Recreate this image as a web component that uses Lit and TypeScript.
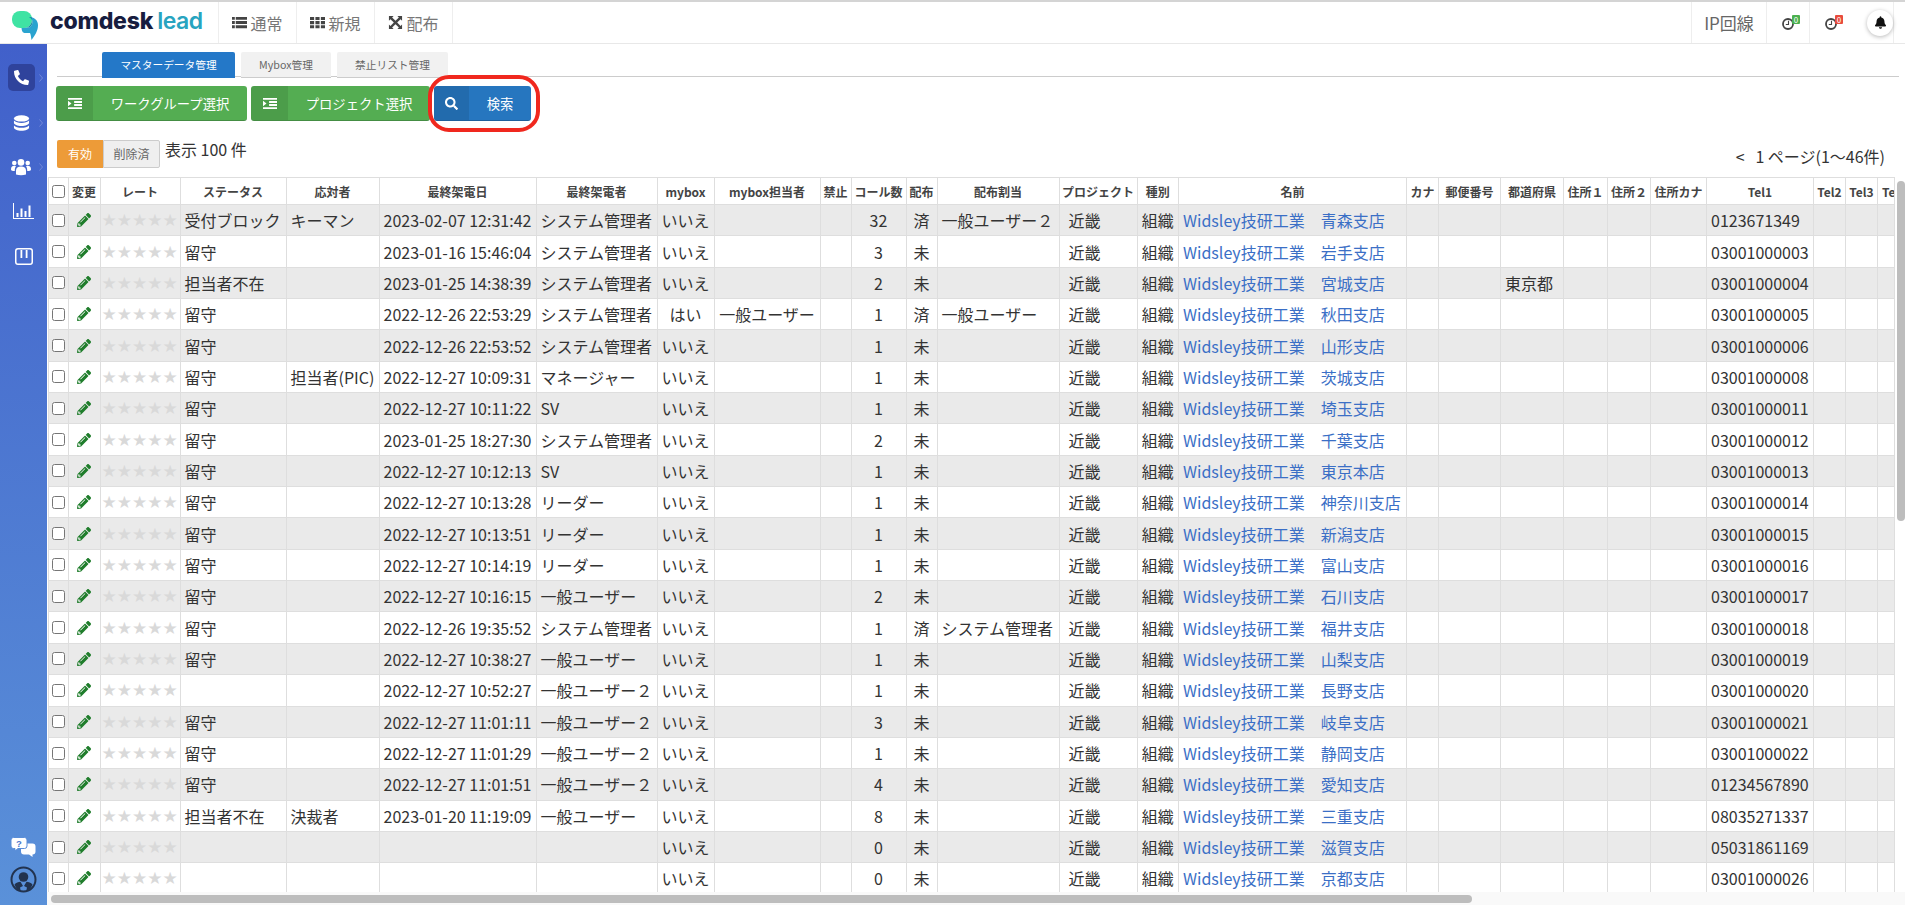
import { LitElement, html, css, svg } from "lit";
import { customElement } from "lit/decorators.js";

// column widths, taken left to right
const cols = [
  { w: 19.5, label: "" },
  { w: 32, label: "変更" },
  { w: 80, label: "レート" },
  { w: 106, label: "ステータス" },
  { w: 93, label: "応対者" },
  { w: 157, label: "最終架電日" },
  { w: 121, label: "最終架電者" },
  { w: 57, label: "mybox" },
  { w: 106, label: "mybox担当者" },
  { w: 31, label: "禁止" },
  { w: 55, label: "コール数" },
  { w: 31, label: "配布" },
  { w: 122, label: "配布割当" },
  { w: 78, label: "プロジェクト" },
  { w: 41.5, label: "種別" },
  { w: 228, label: "名前" },
  { w: 32, label: "カナ" },
  { w: 62, label: "郵便番号" },
  { w: 63, label: "都道府県" },
  { w: 44, label: "住所１" },
  { w: 43, label: "住所２" },
  { w: 56, label: "住所カナ" },
  { w: 107, label: "Tel1" },
  { w: 32, label: "Tel2" },
  { w: 32, label: "Tel3" },
  { w: 16.5, label: "Tel4" },
];

interface Row {
  st: string;
  res: string;
  date: string;
  by: string;
  mb: string;
  mbBy?: string;
  n: string;
  dist: string;
  assign?: string;
  branch: string;
  pref?: string;
  tel: string;
}

const rows: Row[] = [
  { st: "受付ブロック", res: "キーマン", date: "2023-02-07 12:31:42", by: "システム管理者", mb: "いいえ", n: "32", dist: "済", assign: "一般ユーザー２", branch: "青森支店", tel: "0123671349" },
  { st: "留守", res: "", date: "2023-01-16 15:46:04", by: "システム管理者", mb: "いいえ", n: "3", dist: "未", branch: "岩手支店", tel: "03001000003" },
  { st: "担当者不在", res: "", date: "2023-01-25 14:38:39", by: "システム管理者", mb: "いいえ", n: "2", dist: "未", branch: "宮城支店", pref: "東京都", tel: "03001000004" },
  { st: "留守", res: "", date: "2022-12-26 22:53:29", by: "システム管理者", mb: "はい", mbBy: "一般ユーザー", n: "1", dist: "済", assign: "一般ユーザー", branch: "秋田支店", tel: "03001000005" },
  { st: "留守", res: "", date: "2022-12-26 22:53:52", by: "システム管理者", mb: "いいえ", n: "1", dist: "未", branch: "山形支店", tel: "03001000006" },
  { st: "留守", res: "担当者(PIC)", date: "2022-12-27 10:09:31", by: "マネージャー", mb: "いいえ", n: "1", dist: "未", branch: "茨城支店", tel: "03001000008" },
  { st: "留守", res: "", date: "2022-12-27 10:11:22", by: "SV", mb: "いいえ", n: "1", dist: "未", branch: "埼玉支店", tel: "03001000011" },
  { st: "留守", res: "", date: "2023-01-25 18:27:30", by: "システム管理者", mb: "いいえ", n: "2", dist: "未", branch: "千葉支店", tel: "03001000012" },
  { st: "留守", res: "", date: "2022-12-27 10:12:13", by: "SV", mb: "いいえ", n: "1", dist: "未", branch: "東京本店", tel: "03001000013" },
  { st: "留守", res: "", date: "2022-12-27 10:13:28", by: "リーダー", mb: "いいえ", n: "1", dist: "未", branch: "神奈川支店", tel: "03001000014" },
  { st: "留守", res: "", date: "2022-12-27 10:13:51", by: "リーダー", mb: "いいえ", n: "1", dist: "未", branch: "新潟支店", tel: "03001000015" },
  { st: "留守", res: "", date: "2022-12-27 10:14:19", by: "リーダー", mb: "いいえ", n: "1", dist: "未", branch: "富山支店", tel: "03001000016" },
  { st: "留守", res: "", date: "2022-12-27 10:16:15", by: "一般ユーザー", mb: "いいえ", n: "2", dist: "未", branch: "石川支店", tel: "03001000017" },
  { st: "留守", res: "", date: "2022-12-26 19:35:52", by: "システム管理者", mb: "いいえ", n: "1", dist: "済", assign: "システム管理者", branch: "福井支店", tel: "03001000018" },
  { st: "留守", res: "", date: "2022-12-27 10:38:27", by: "一般ユーザー", mb: "いいえ", n: "1", dist: "未", branch: "山梨支店", tel: "03001000019" },
  { st: "", res: "", date: "2022-12-27 10:52:27", by: "一般ユーザー２", mb: "いいえ", n: "1", dist: "未", branch: "長野支店", tel: "03001000020" },
  { st: "留守", res: "", date: "2022-12-27 11:01:11", by: "一般ユーザー２", mb: "いいえ", n: "3", dist: "未", branch: "岐阜支店", tel: "03001000021" },
  { st: "留守", res: "", date: "2022-12-27 11:01:29", by: "一般ユーザー２", mb: "いいえ", n: "1", dist: "未", branch: "静岡支店", tel: "03001000022" },
  { st: "留守", res: "", date: "2022-12-27 11:01:51", by: "一般ユーザー２", mb: "いいえ", n: "4", dist: "未", branch: "愛知支店", tel: "01234567890" },
  { st: "担当者不在", res: "決裁者", date: "2023-01-20 11:19:09", by: "一般ユーザー", mb: "いいえ", n: "8", dist: "未", branch: "三重支店", tel: "08035271337" },
  { st: "", res: "", date: "", by: "", mb: "いいえ", n: "0", dist: "未", branch: "滋賀支店", tel: "05031861169" },
  { st: "", res: "", date: "", by: "", mb: "いいえ", n: "0", dist: "未", branch: "京都支店", tel: "03001000026" },
];

const pencil = svg`<svg class="pencil" viewBox="0 0 512 512"><path fill="#1f7d2b" d="M497.9 142.1l-46.1 46.1c-4.7 4.7-12.3 4.7-17 0l-111-111c-4.7-4.7-4.7-12.3 0-17l46.1-46.1c18.7-18.7 49.1-18.7 67.9 0l60.1 60.1c18.8 18.7 18.8 49.1 0 67.9zM284.2 99.8L21.6 362.4.4 483.9c-2.9 16.4 11.4 30.6 27.8 27.8l121.5-21.3 262.6-262.6c4.7-4.7 4.7-12.3 0-17l-111-111c-4.8-4.7-12.4-4.7-17.1 0zM124.1 339.9c-5.5-5.5-5.5-14.3 0-19.8l154-154c5.5-5.5 14.3-5.5 19.8 0s5.5 14.3 0 19.8l-154 154c-5.5 5.5-14.3 5.5-19.8 0zM88 424h48v36.3l-64.5 11.3-31.1-31.1L51.7 376H88v48z"/></svg>`;

const indentIcon = svg`<svg class="btn-svg" viewBox="0 0 16 12" preserveAspectRatio="none"><path fill="#fff" d="M0 0h16v2H0zM0 10h16v2H0zM7 3.400h9v2H7zM7 6.600h9v2H7zM0 3v6l4-3z"/></svg>`;

const clock = svg`<svg viewBox="0 0 12 12"><circle cx="6" cy="6" r="5" fill="none" stroke="#444" stroke-width="1.800"/><path d="M6.500 2.800V6.500H3.800" fill="none" stroke="#444" stroke-width="1.100"/></svg>`;

@customElement("app-root")
export class AppRoot extends LitElement {
  static styles = css`
    :host {
      display: block;
      height: 100vh;
      overflow: hidden;
      background: #fff;
      color: #333;
      font-family: "Noto Sans CJK JP", "Noto Sans", sans-serif;
      font-size: 16px;
    }
    .topbar {
      height: 44px;
      box-sizing: border-box;
      display: flex;
      border-top: 2px solid #d4d4d4;
      border-bottom: 1px solid #e8e8e8;
    }
    .brand {
      width: 219px;
      display: flex;
      align-items: center;
      box-sizing: border-box;
      padding-left: 12px;
      border-right: 1px solid #eee;
    }
    .brand-mark {
      width: 27px;
      height: 30px;
      margin-top: 6px;
      flex: none;
    }
    .brand-name {
      margin-left: 11px;
      font-family: "Inter", sans-serif;
      font-weight: 800;
      font-size: 23px;
      letter-spacing: -0.2px;
      color: #171d3f;
      line-height: 1;
      white-space: nowrap;
      margin-top: -3px;
    }
    .brand-name span {
      color: #28a4c0;
      font-weight: 600;
      margin-left: 4px;
      letter-spacing: -0.5px;
    }
    .nav-item {
      width: 78px;
      box-sizing: border-box;
      display: flex;
      align-items: center;
      justify-content: center;
      gap: 3px;
      color: #777;
      border-right: 1px solid #eee;
      font-size: 16px;
    }
    .nav-item svg {
      width: 15px;
      height: 15px;
      fill: #444;
    }
    .spacer {
      flex: 1;
      border-right: 1px solid #eee;
    }
    .ip {
      width: 75px;
      box-sizing: border-box;
      display: flex;
      align-items: center;
      justify-content: center;
      color: #666;
      font-size: 17px;
      border-right: 1px solid #eee;
    }
    .timer {
      width: 43px;
      box-sizing: border-box;
      display: flex;
      align-items: center;
      padding-left: 15px;
      border-right: 1px solid #eee;
    }
    .timer-in {
      position: relative;
      width: 12px;
      height: 12px;
      margin-top: 2px;
      flex: none;
    }
    .timer-in svg {
      display: block;
      width: 12px;
      height: 12px;
    }
    .badge {
      position: absolute;
      left: 10px;
      top: -3px;
      width: 8px;
      height: 9px;
      border-radius: 1px;
      color: #fff;
      font-size: 8px;
      line-height: 9px;
      text-align: center;
    }
    .badge.ok {
      background: #4cb050;
    }
    .badge.alert {
      background: #e84c3d;
    }
    .bell-cell {
      width: 84px;
      box-sizing: border-box;
      display: flex;
      align-items: center;
      padding-left: 15px;
      border-right: 1px solid #eee;
      margin-right: 11px;
    }
    .bell {
      width: 26px;
      height: 26px;
      border-radius: 50%;
      background: #fff;
      box-shadow: 0 1px 4px rgba(0, 0, 0, 0.28);
      display: flex;
      align-items: center;
      justify-content: center;
      margin-left: 30px;
      flex: none;
    }
    .bell svg {
      width: 11px;
      height: 13px;
    }
    .body {
      display: flex;
      height: 861px;
    }
    .side {
      width: 47px;
      flex: none;
      background: linear-gradient(#4160ca, #5a91d9);
      display: flex;
      flex-direction: column;
      align-items: center;
      box-sizing: border-box;
      padding-top: 20px;
    }
    .side-item {
      width: 27px;
      height: 27px;
      margin-bottom: 17.5px;
      margin-right: 5px;
      border-radius: 5px;
      display: flex;
      align-items: center;
      justify-content: center;
      position: relative;
    }
    .side-item.on {
      background: #2f439c;
    }
    .side-item .ico {
      width: 18px;
      height: 18px;
      fill: #fff;
    }
    .side-item .ico.phone {
      width: 15px;
      height: 15px;
    }
    .side-item .ico.db {
      width: 17px;
      height: 18px;
      margin-top: 3px;
    }
    .side-item .ico.users {
      width: 20px;
    }
    .side-item .ico.chart {
      width: 21px;
      height: 16px;
    }
    .chev {
      position: absolute;
      left: 31px;
      top: 10px;
      width: 4px;
      height: 8px;
    }
    .side-bottom {
      margin-top: auto;
      display: flex;
      flex-direction: column;
      align-items: center;
      padding-bottom: 12px;
      gap: 9px;
    }
    .side-bottom svg {
      display: block;
    }
    .main {
      flex: 1;
      min-width: 0;
      display: flex;
      flex-direction: column;
      position: relative;
    }
    .tabs {
      display: flex;
      gap: 6px;
      margin: 8px 6px 0 10px;
      padding-left: 45px;
      height: 24px;
      border-bottom: 1px solid #ccc;
    }
    .tab {
      height: 26px;
      box-sizing: border-box;
      font-size: 10.7px;
      line-height: 26px;
      text-align: center;
      border-radius: 2px 2px 0 0;
      background: #f1f1f1;
      color: #666;
      border-bottom: 1px solid #ccc;
    }
    .tab.on {
      background: #2478c8;
      color: #fff;
      border-bottom-color: #2478c8;
    }
    .actions {
      display: flex;
      gap: 4px;
      margin: 9px 0 0 9px;
    }
    .btn {
      height: 35px;
      box-sizing: border-box;
      display: flex;
      border-radius: 3px;
      color: #fff;
      font-size: 13.33px;
      overflow: hidden;
      border-bottom: 1px solid rgba(0, 0, 0, 0.18);
    }
    .btn.green {
      background: #54ad52;
    }
    .btn.blue {
      background: #2676bf;
    }
    .btn-icon {
      flex: none;
      display: flex;
      align-items: center;
      justify-content: center;
      background: rgba(0, 0, 0, 0.09);
    }
    .btn-label {
      flex: 1;
      display: flex;
      align-items: center;
      justify-content: center;
      white-space: nowrap;
    }
    .btn-svg {
      width: 14px;
      height: 11px;
      fill: #fff;
    }
    .btn-svg.search {
      width: 13px;
      height: 13px;
    }
    .annot {
      position: absolute;
      left: 381px;
      top: 31px;
      width: 112px;
      height: 57px;
      box-sizing: border-box;
      border: 4px solid #f0281e;
      border-radius: 21px;
    }
    .filter-row {
      display: flex;
      align-items: flex-start;
      height: 37px;
      margin: 19px 20px 0 10px;
    }
    .seg {
      height: 28px;
      box-sizing: border-box;
      font-size: 12px;
      line-height: 28px;
      text-align: center;
    }
    .seg.on {
      width: 46px;
      background: #ed9b38;
      color: #fff;
      border-radius: 2px 0 0 2px;
    }
    .seg.off {
      width: 57px;
      background: #efefef;
      color: #666;
      border: 1px solid #ccc;
      border-radius: 0 2px 2px 0;
      line-height: 26px;
    }
    .count {
      margin-left: 5px;
      line-height: 19px;
    }
    .pager {
      margin-left: auto;
      margin-top: 4px;
      line-height: 24px;
      white-space: pre;
    }
    .grid-wrap {
      flex: 1;
      position: relative;
      background: #f9f9f9;
    }
    .grid {
      height: 715px;
      overflow: hidden;
      background: #fff;
      padding-left: 1px;
    }
    table {
      border-collapse: collapse;
      table-layout: fixed;
      width: 1845px;
    }
    th,
    td {
      border: 1px solid #dedede;
      padding: 0 4px;
      white-space: nowrap;
      overflow: hidden;
      box-sizing: border-box;
    }
    th {
      height: 27px;
      font-size: 12px;
      font-weight: 700;
      color: #444;
      text-align: center;
      padding: 0;
    }
    th:last-child {
      text-align: left;
      padding-left: 4px;
    }
    td {
      height: 31.35px;
      line-height: 20px;
    }
    tbody tr:nth-child(odd) td {
      background: #eaeaea;
    }
    .mid {
      text-align: center;
      padding: 0;
    }
    .stars {
      font-family: "DejaVu Sans", sans-serif;
      font-size: 17px;
      color: #d9d9d9;
      padding: 0 0 0 1px;
    }
    .pj {
      padding-left: 9px;
    }
    .name {
      color: #3b6fc6;
    }
    input[type="checkbox"] {
      display: block;
      margin: 0 auto;
      width: 13px;
      height: 13px;
    }
    .pencil {
      display: block;
      width: 14px;
      height: 14px;
      margin: 0 auto;
    }
    .thumb {
      position: absolute;
      background: #bdbdbd;
      border-radius: 4px;
    }
    .thumb.h {
      left: 4px;
      bottom: 2px;
      width: 1421px;
      height: 8px;
    }
    .thumb.v {
      right: 0;
      top: 4px;
      width: 8px;
      height: 340px;
    }
  `;

  renderNav() {
    return html`
      <div class="nav-item">
        <svg viewBox="0 0 16 16"><path d="M0 2h3v3H0zM4 2h12v3H4zM0 6.5h3v3H0zM4 6.5h12v3H4zM0 11h3v3H0zM4 11h12v3H4z"/></svg>
        通常
      </div>
      <div class="nav-item">
        <svg viewBox="0 0 16 16"><path d="M0 2h4.4v3.4H0zM5.8 2h4.4v3.4H5.8zM11.6 2H16v3.4h-4.4zM0 6.4h4.4v3.4H0zM5.8 6.4h4.4v3.4H5.8zM11.6 6.4H16v3.4h-4.4zM0 10.8h4.4v3.4H0zM5.8 10.8h4.4v3.4H5.8zM11.6 10.8H16v3.4h-4.4z"/></svg>
        新規
      </div>
      <div class="nav-item">
        <svg viewBox="0 0 16 16"><path d="M1 1h5L4.4 2.6 8 6.2l3.6-3.6L10 1h5v5l-1.6-1.6L9.8 8l3.6 3.6L15 10v5h-5l1.6-1.6L8 9.8l-3.6 3.6L6 15H1v-5l1.6 1.6L6.2 8 2.6 4.4 1 6z"/></svg>
        配布
      </div>
    `;
  }

  renderSide() {
    const chev = html`<svg class="chev" viewBox="0 0 4 8"><path d="M.5.5 3.500 4 .5 7.500" fill="none" stroke="#7389d8" stroke-width="1"/></svg>`;
    return html`
      <div class="side-item on">
        <svg class="ico phone" viewBox="0 0 512 512"><path transform="translate(512 0) scale(-1 1)" d="M493.4 24.6l-104-24c-11.3-2.6-22.9 3.3-27.5 13.9l-48 112c-4.2 9.8-1.4 21.3 6.9 28l60.6 49.6c-36 76.7-98.9 140.5-177.2 177.2l-49.6-60.6c-6.8-8.3-18.2-11.1-28-6.9l-112 48C3.9 366.5-2 378.1.6 389.4l24 104C27.1 504.2 36.7 512 48 512c256.1 0 464-207.5 464-464 0-11.2-7.7-20.9-18.6-23.4z"/></svg>
        ${chev}
      </div>
      <div class="side-item">
        <svg class="ico db" viewBox="0 0 18 18" preserveAspectRatio="none"><ellipse cx="9" cy="3.400" rx="8" ry="3.200"/><path d="M1 5.600v2.200C1 9.600 4.600 11 9 11s8-1.400 8-3.200V5.600c-1.500 1.600-4.600 2.400-8 2.400S2.500 7.200 1 5.600zM1 10.400v2.200C1 14.400 4.600 15.800 9 15.800s8-1.400 8-3.200v-2.200c-1.500 1.600-4.600 2.400-8 2.400s-6.500-.8-8-2.400z"/></svg>
        ${chev}
      </div>
      <div class="side-item">
        <svg class="ico users" viewBox="0 0 20 18"><circle cx="10" cy="4.400" r="3.300"/><circle cx="3.300" cy="5" r="2.300"/><circle cx="16.700" cy="5" r="2.300"/><path d="M5 16.500v-4C5 10 7 8.500 10 8.500s5 1.500 5 4v4c-3 1-7 1-10 0zM0 11.500c0-2.500 1-3.700 3.300-3.700.7 0 1.200.1 1.700.4-.8.9-1.200 2.300-1.200 3.800v1C1.500 13 0 12.500 0 11.500zM20 11.500c0-2.500-1-3.700-3.300-3.700-.7 0-1.200.1-1.700.4.800.9 1.200 2.300 1.200 3.800v1c2.300 0 3.800-.5 3.800-1.500z"/></svg>
        ${chev}
      </div>
      <div class="side-item" style="margin-right:0">
        <svg class="ico chart" viewBox="0 0 21 16"><path d="M0 0h1v15h20v1H0zM3.500 10h2v4h-2zM7.500 5.500h2V14h-2zM11.500 8h2v6h-2zM15.500 2.500h2V14h-2z"/></svg>
      </div>
      <div class="side-item" style="margin-right:0">
        <svg class="ico" viewBox="0 0 18 18"><path fill-rule="evenodd" d="M3 1h12a3 3 0 0 1 3 3v11a3 3 0 0 1-3 3H3a3 3 0 0 1-3-3V4a3 3 0 0 1 3-3zm0 1.500A1.500 1.500 0 0 0 1.500 4v11A1.500 1.500 0 0 0 3 16.500h12a1.500 1.500 0 0 0 1.500-1.500V4A1.500 1.500 0 0 0 15 2.500zM5.500 3h1.800v8H5.500zM10.700 3h1.800v8h-1.800z"/></svg>
      </div>
      <div class="side-bottom">
        <svg width="25" height="20" viewBox="0 0 25 20">
          <path fill="#fff" d="M11 6.500h10.500a3 3 0 0 1 3 3v5a3 3 0 0 1-3 3v2.500l-3.500-2.500H13a3 3 0 0 1-3-3V7z"/>
          <path fill="#fff" stroke="#5a8ed8" stroke-width="1" d="M2.500.5h11a2.500 2.500 0 0 1 2.500 2.500v6a2.500 2.500 0 0 1-2.500 2.500H7l-3 2.500v-2.500H2.500A2.500 2.500 0 0 1 0 9V3A2.500 2.500 0 0 1 2.500.500z"/>
          <text x="8" y="9.500" font-size="9.500" font-weight="700" fill="#4a78cc" text-anchor="middle" font-family="Liberation Sans, sans-serif">?</text>
        </svg>
        <svg width="27" height="27" viewBox="0 0 27 27">
          <circle cx="13.500" cy="13.500" r="12" fill="none" stroke="#22334f" stroke-width="2"/>
          <circle cx="13.500" cy="11" r="4.800" fill="#22334f"/>
          <path fill="#22334f" d="M4.500 18.500c1.500-2 4-2.800 6-2.800L13 20l-3 1.500.8 3.500c-2.800-.6-5-2.500-6.300-6.500zM22.500 18.500c-1.500-2-4-2.800-6-2.800L14 20l3 1.500-.8 3.500c2.800-.6 5-2.500 6.300-6.500z"/>
        </svg>
      </div>
    `;
  }

  renderRow(r: Row) {
    return html`
      <tr>
        <td class="mid"><input type="checkbox" /></td>
        <td class="mid">${pencil}</td>
        <td class="stars">★★★★★</td>
        <td>${r.st}</td>
        <td>${r.res}</td>
        <td>${r.date}</td>
        <td>${r.by}</td>
        <td class="mid">${r.mb}</td>
        <td class="mid">${r.mbBy ?? ""}</td>
        <td></td>
        <td class="mid">${r.n}</td>
        <td class="mid">${r.dist}</td>
        <td>${r.assign ?? ""}</td>
        <td class="pj">近畿</td>
        <td class="mid">組織</td>
        <td class="name">Widsley技研工業　${r.branch}</td>
        <td></td>
        <td></td>
        <td>${r.pref ?? ""}</td>
        <td></td>
        <td></td>
        <td></td>
        <td>${r.tel}</td>
        <td></td>
        <td></td>
        <td></td>
      </tr>
    `;
  }

  render() {
    return html`
      <div class="topbar">
        <div class="brand">
          <svg class="brand-mark" viewBox="0 0 27 30">
            <path fill="#3fe3a3" d="M8 0h4a8 8 0 0 1 8 8v1a8 8 0 0 1-8 8H8a8 8 0 0 1-8-8V8a8 8 0 0 1 8-8z"/>
            <path fill="#2aa3cf" d="M17 6c5 0 9 3 9 8 0 6-3 10-6.500 15-.5-3-.5-5-1.500-7h-5c-1.500 0-3-.5-3.500-5h4c5 0 7-3 7-6 0-2-1-4-3.500-5z"/>
            <path fill="#1d8aa6" d="M10 17h2a8 8 0 0 0 8-8V6.500C18.500 6 18 6 17 6c2.500 1 3.500 3 3.500 5 0 3-2 6-7 6z"/>
          </svg>
          <div class="brand-name">comdesk<span>lead</span></div>
        </div>
        ${this.renderNav()}
        <div class="spacer"></div>
        <div class="ip">IP回線</div>
        <div class="timer">
          <div class="timer-in">${clock}<span class="badge ok">0</span></div>
        </div>
        <div class="bell-cell">
          <div class="timer-in">${clock}<span class="badge alert">0</span></div>
          <div class="bell">
            <svg viewBox="0 0 448 512"><path fill="#111" d="M224 512c35.300 0 64-28.700 64-64H160c0 35.300 28.700 64 64 64zm215.400-149.700c-19.300-20.800-55.500-52-55.500-154.300 0-77.700-54.500-139.900-127.900-155.200V32c0-17.700-14.300-32-32-32s-32 14.300-32 32v20.800C118.600 68.100 64.100 130.300 64.100 208c0 102.300-36.200 133.500-55.500 154.300-6 6.400-8.700 14.100-8.600 21.700.1 16.400 13 32 32.100 32h383.800c19.100 0 32-15.600 32.100-32 .1-7.600-2.600-15.300-8.600-21.700z"/></svg>
          </div>
        </div>
      </div>
      <div class="body">
        <div class="side">${this.renderSide()}</div>
        <div class="main">
          <div class="tabs">
            <div class="tab on" style="width:133px">マスターデータ管理</div>
            <div class="tab" style="width:90px">Mybox管理</div>
            <div class="tab" style="width:111px">禁止リスト管理</div>
          </div>
          <div class="actions">
            <div class="btn green" style="width:191px">
              <div class="btn-icon" style="width:37px">${indentIcon}</div>
              <div class="btn-label">ワークグループ選択</div>
            </div>
            <div class="btn green" style="width:179px">
              <div class="btn-icon" style="width:37px">${indentIcon}</div>
              <div class="btn-label">プロジェクト選択</div>
            </div>
            <div class="btn blue" style="width:97px">
              <div class="btn-icon" style="width:35px">
                <svg class="btn-svg search" viewBox="0 0 512 512"><path d="M505 442.700L405.300 343c-4.500-4.500-10.600-7-17-7H372c27.600-35.300 44-79.700 44-128C416 93.100 322.900 0 208 0S0 93.100 0 208s93.100 208 208 208c48.300 0 92.700-16.400 128-44v16.300c0 6.400 2.500 12.500 7 17l99.700 99.700c9.400 9.400 24.600 9.400 33.900 0l28.300-28.300c9.400-9.400 9.400-24.600.1-34zM208 336c-70.700 0-128-57.200-128-128 0-70.700 57.200-128 128-128 70.700 0 128 57.200 128 128 0 70.700-57.200 128-128 128z"/></svg>
              </div>
              <div class="btn-label">検索</div>
            </div>
          </div>
          <div class="annot"></div>
          <div class="filter-row">
            <div class="seg on">有効</div>
            <div class="seg off">削除済</div>
            <div class="count">表示 100 件</div>
            <div class="pager">&lt;   1 ページ(1〜46件)</div>
          </div>
          <div class="grid-wrap">
            <div class="grid">
              <table>
                <colgroup>
                  ${cols.map((c) => html`<col style="width:${c.w}px" />`)}
                </colgroup>
                <thead>
                  <tr>
                    <th><input type="checkbox" /></th>
                    ${cols.slice(1).map((c) => html`<th>${c.label}</th>`)}
                  </tr>
                </thead>
                <tbody>
                  ${rows.map((r) => this.renderRow(r))}
                </tbody>
              </table>
            </div>
            <div class="thumb h"></div>
            <div class="thumb v"></div>
          </div>
        </div>
      </div>
    `;
  }
}
